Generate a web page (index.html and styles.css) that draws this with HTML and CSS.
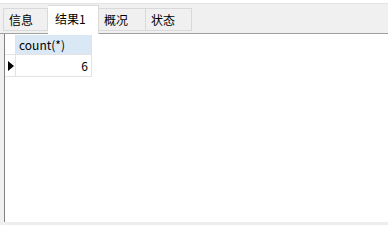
FILE: index.html
```html
<!DOCTYPE html>
<html lang="zh-CN">
  <head>
    <meta charset="UTF-8" />
    <title>结果1</title>
    <link rel="stylesheet" href="styles.css">
  </head>
  <body>
    <div class="topbar"></div>
    <div class="tabs">
      <div class="tab first">信息</div>
      <div class="tab active">结果1</div>
      <div class="tab third">概况</div>
      <div class="tab">状态</div>
    </div>
    <div class="content">
      <div class="grid">
        <div class="cell corner"></div>
        <div class="cell head">count(*)</div>
        <div class="cell marker"><span class="arrow"></span></div>
        <div class="cell num">6</div>
      </div>
    </div>
    <div class="bottombar"></div>
  </body>
</html>
```

FILE: styles.css
```css
html,
body {
  margin: 0;
  padding: 0;
}

body {
  width: 388px;
  height: 225px;
  overflow: hidden;
  background: #f0f0f0;
  font-family: "Noto Sans CJK SC", "Noto Sans", sans-serif;
  font-size: 12px;
  color: #000;
  display: flex;
  flex-direction: column;
}

.topbar {
  height: 3px;
  background: #fff;
  border-bottom: 1px solid #e3e3e3;
}

.tabs {
  display: flex;
  align-items: flex-end;
  height: 29px;
  padding-left: 3px;
  border-bottom: 1px solid #a0a0a0;
}

.tab {
  height: 21px;
  margin-bottom: 2px;
  padding: 0 5px;
  width: 35px;
  line-height: 22px;
  background: #f0f0f0;
  border: 1px solid #d9d9d9;
  border-left: none;
}

.tab.first {
  border-left: 1px solid #d9d9d9;
  width: 33px;
}

.tab.third {
  width: 36px;
}

.tab.active {
  height: 28px;
  margin-bottom: -1px;
  width: 38px;
  padding: 0 5px 0 7px;
  line-height: 26px;
  background: #fff;
  border-color: #d9d9d9;
  border-bottom: none;
}

.content {
  flex: 1;
  margin-left: 4px;
  border-left: 1px solid #828282;
  background: #fff;
  padding-top: 1px;
}

.grid {
  display: grid;
  grid-template-columns: 11px 76px;
  grid-template-rows: 20px 22px;
}

.cell {
  border-right: 1px solid #e3e3e3;
  border-bottom: 1px solid #e3e3e3;
}

.head {
  background: #dae8f6;
  padding-left: 3px;
  line-height: 20px;
}

.marker {
  display: flex;
  align-items: center;
  padding-left: 3px;
}

.arrow {
  width: 0;
  height: 0;
  border-top: 5px solid transparent;
  border-bottom: 5px solid transparent;
  border-left: 6px solid #000;
}

.num {
  text-align: right;
  padding-right: 3px;
  line-height: 22px;
}

.bottombar {
  height: 3px;
  margin-left: 5px;
  background: #ededed;
}
```
